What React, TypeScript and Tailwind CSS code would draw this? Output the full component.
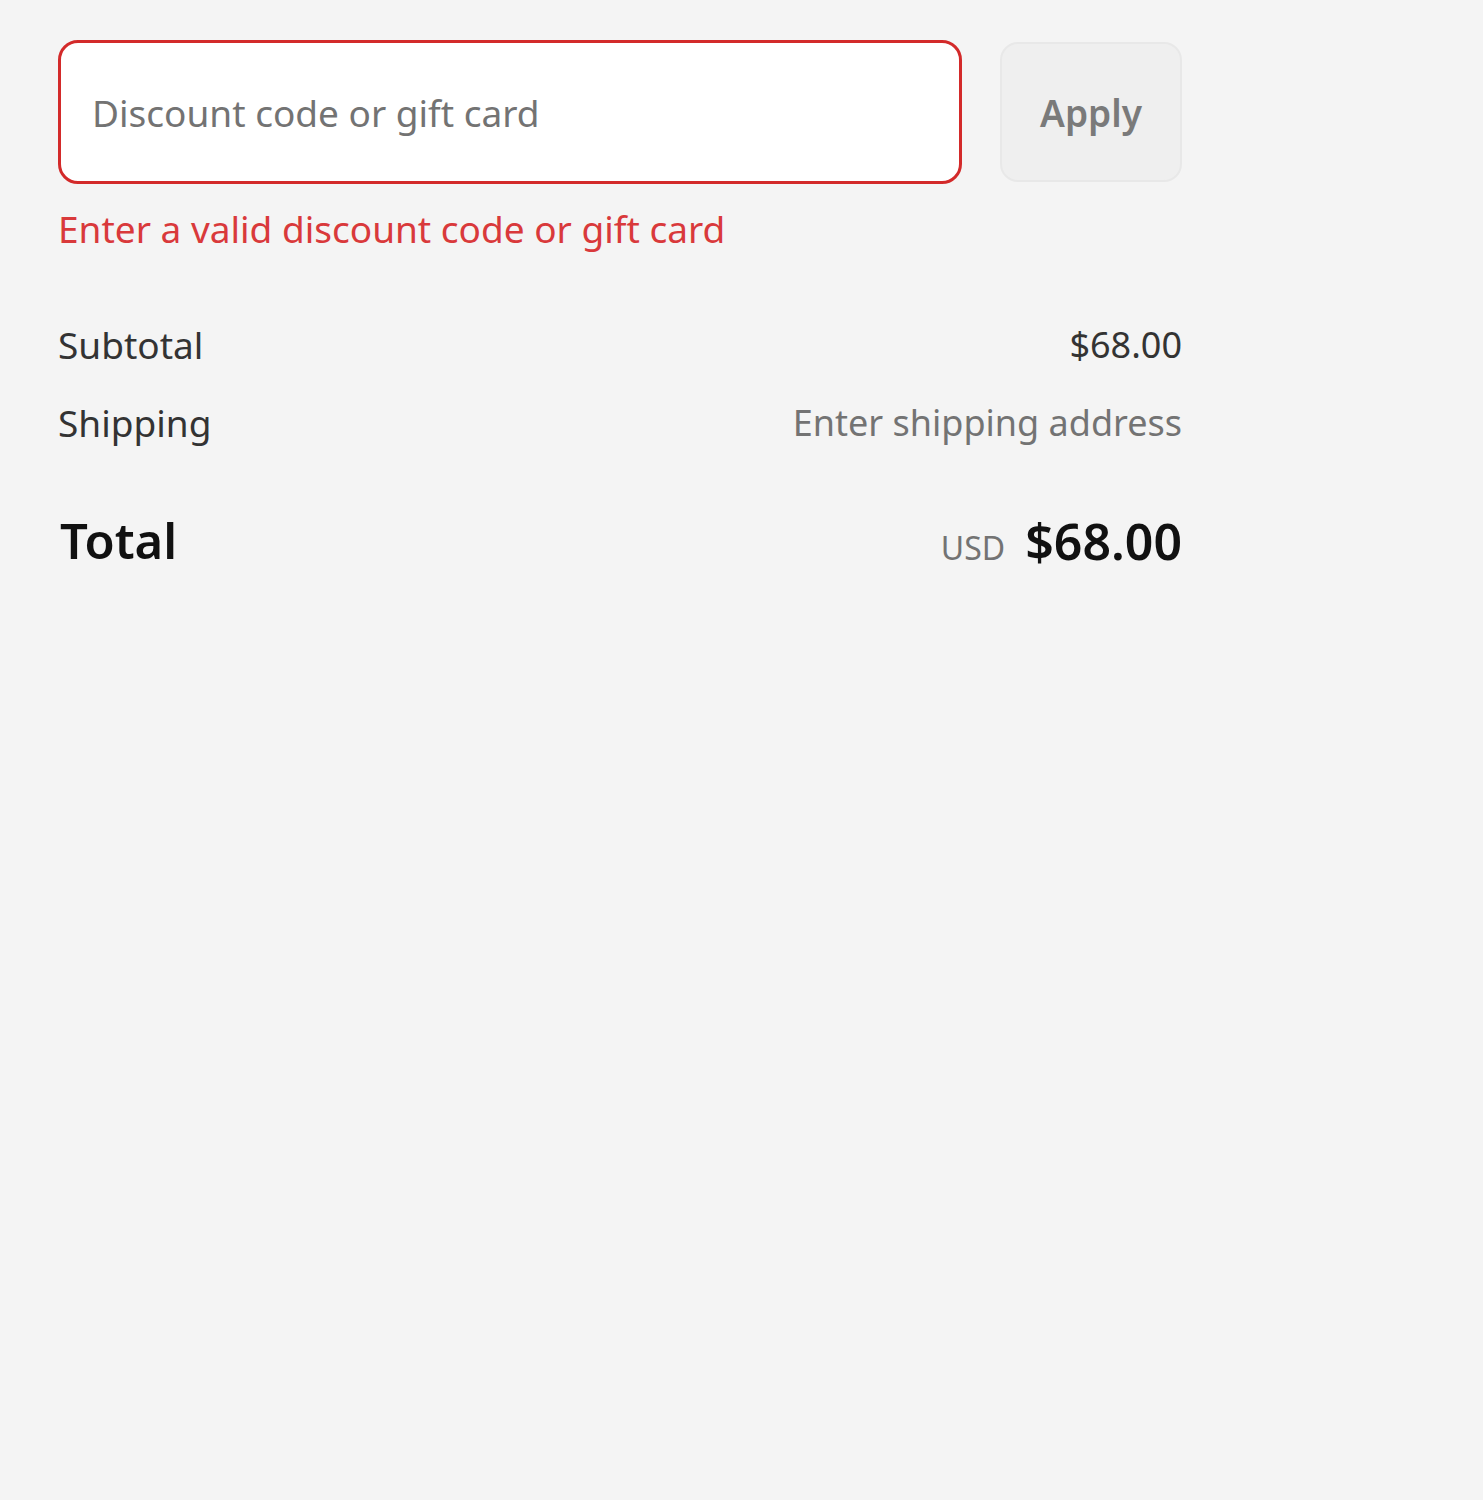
import React from "react";

export default function App() {
  return (
    <div
      className="min-h-screen bg-[#f4f4f4] pt-[40px] pl-[58px]"
      style={{ fontFamily: '"Noto Sans", "Open Sans", sans-serif' }}
    >
      <div className="w-[1124px]">
        <div className="flex gap-[38px]">
          <div className="flex-1 h-[144px] rounded-[20px] border-[3px] border-[#d32a2a] bg-white flex items-center pl-[31px]">
            <span className="text-[37px] text-[#737373] leading-none">Discount code or gift card</span>
          </div>
          <button className="w-[182px] h-[140px] mt-[2px] rounded-[18px] border-[2px] border-[#e8e8e8] bg-[#efefef] flex items-center justify-center">
            <span className="text-[37px] font-semibold text-[#7a7a7a] leading-none">Apply</span>
          </button>
        </div>
        <div className="mt-[21px] h-[48px] flex items-center text-[37px] text-[#d9393b]">
          Enter a valid discount code or gift card
        </div>
        <div className="mt-[67px] h-[50px] flex items-center justify-between text-[37px] text-[#333333]">
          <span>Subtotal</span>
          <span className="text-[36px]">$68.00</span>
        </div>
        <div className="mt-[28px] h-[50px] flex items-center justify-between text-[37px]">
          <span className="text-[#333333]">Shipping</span>
          <span className="text-[36px] text-[#737373]">Enter shipping address</span>
        </div>
        <div className="mt-[58px] h-[70px] flex items-center justify-between">
          <span className="text-[49px] font-semibold text-[#111111] pl-[2px]">Total</span>
          <span className="flex items-baseline gap-[20px]">
            <span className="text-[32px] text-[#737373]">USD</span>
            <span className="text-[50px] font-semibold text-[#111111]">$68.00</span>
          </span>
        </div>
      </div>
    </div>
  );
}
